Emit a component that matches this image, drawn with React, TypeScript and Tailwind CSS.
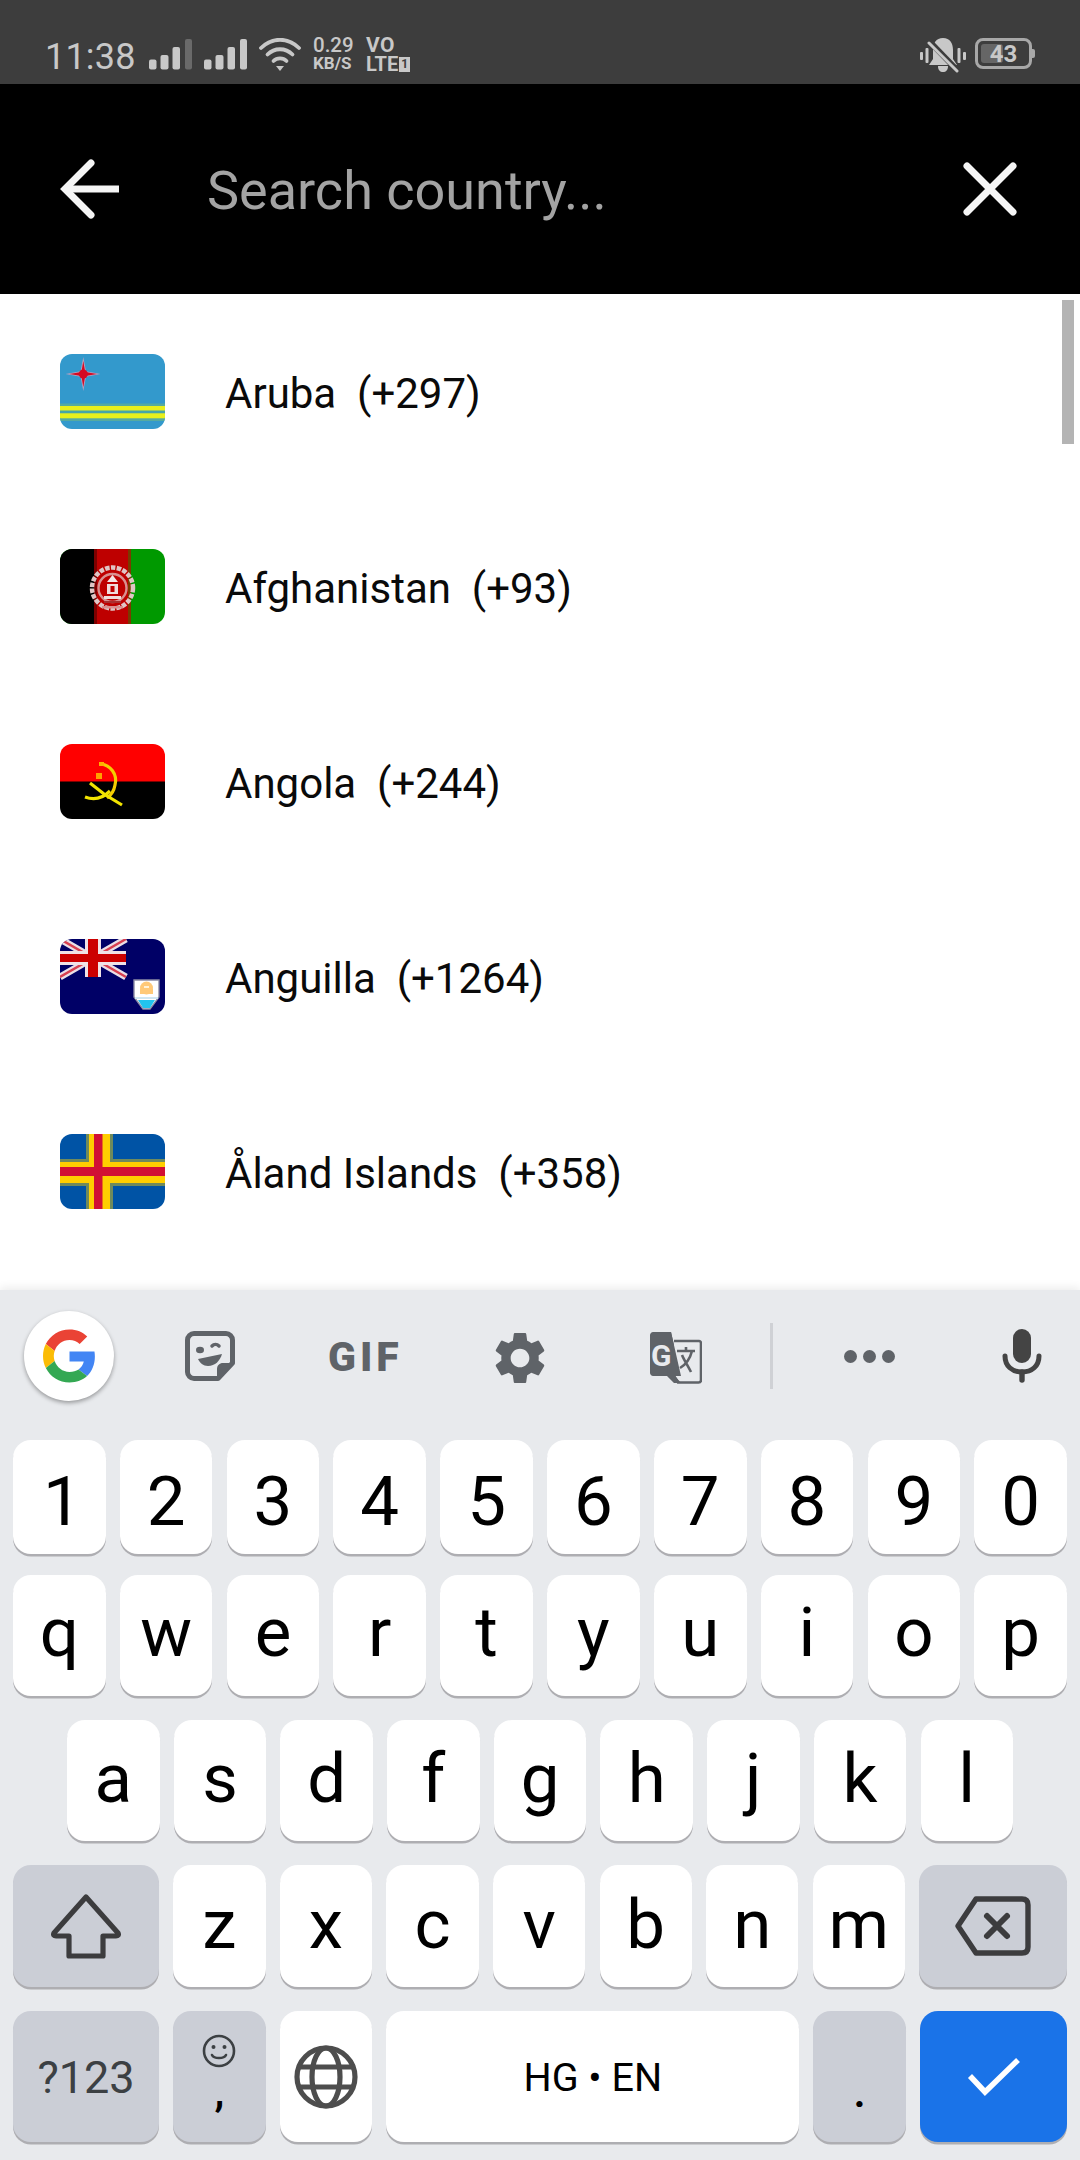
import React from "react";

const font = { fontFamily: "Roboto, sans-serif" };

function Bars({ dim }: { dim?: boolean }) {
  return (
    <svg width="43" height="31" viewBox="0 0 43 31" className="shrink-0">
      <rect x="0" y="20.5" width="7.5" height="10" rx="2" fill="#c8c8c8" />
      <rect x="11.5" y="16" width="8" height="14.5" rx="2" fill="#c8c8c8" />
      <rect x="23.5" y="8" width="7.5" height="22.5" rx="2" fill="#c8c8c8" />
      <rect x="36" y="0" width="7" height="30.5" rx="2" fill={dim ? "#6a6a6a" : "#c8c8c8"} />
    </svg>
  );
}

function Wifi() {
  return (
    <svg width="42" height="34" viewBox="0 0 42 34" fill="none" stroke="#c8c8c8" strokeLinecap="round" className="shrink-0">
      <path d="M2 10C13 -1 29 -1 40 10" strokeWidth="3.8" />
      <path d="M8.5 16.5C15.5 9.5 26.5 9.5 33.5 16.5" strokeWidth="3.8" />
      <path d="M14.5 23C18 19.5 24 19.5 27.5 23" strokeWidth="3.8" />
      <path d="M17 28L25 28L21 33Z" fill="#c8c8c8" stroke="none" />
    </svg>
  );
}

function Bell() {
  return (
    <svg width="46" height="36" viewBox="0 0 46 36" className="shrink-0">
      <path d="M23 1C30 1 33 6 33 13V22L37 28H9L13 22V13C13 6 16 1 23 1Z" fill="#c8c8c8" />
      <path d="M18 29H28C28 33 26 35 23 35C20 35 18 33 18 29Z" fill="#c8c8c8" />
      <path d="M10 5L37 33" stroke="#3d3d3d" strokeWidth="6" />
      <path d="M9 6L37 34" stroke="#c8c8c8" strokeWidth="3" strokeLinecap="round" />
      <rect x="0" y="15" width="3" height="8" rx="1" fill="#c8c8c8" />
      <rect x="5.5" y="11" width="3" height="15" rx="1" fill="#c8c8c8" />
      <rect x="37.5" y="11" width="3" height="15" rx="1" fill="#c8c8c8" />
      <rect x="43" y="15" width="3" height="8" rx="1" fill="#c8c8c8" />
    </svg>
  );
}

function StatusBar() {
  return (
    <div className="h-[84px] bg-[#3d3d3d] flex items-start shrink-0 pt-[37px] pl-[45px] pr-[45px]" style={font}>
      <span className="text-[36px] leading-[36px] mt-[2px] text-[#c8c8c8] w-[104px] shrink-0 tracking-[0.2px]">11:38</span>
      <div className="mt-[2px] flex gap-[12px]">
        <Bars dim />
        <Bars />
      </div>
      <div className="ml-[12px] mt-[1px]">
        <Wifi />
      </div>
      <div className="ml-[12px] w-[53px] flex flex-col text-[#c8c8c8] font-medium">
        <span className="text-[20.5px] leading-[17px]">0.29</span>
        <span className="text-[17px] leading-[16px] mt-[1px] font-bold">KB/S</span>
      </div>
      <div className="flex flex-col text-[#c8c8c8] font-bold">
        <span className="text-[21px] leading-[17px] tracking-[0.5px]">VO</span>
        <div className="flex items-center mt-[2px]">
          <span className="text-[20px] leading-[16px]">LTE</span>
          <span className="ml-[1px] w-[11px] h-[15px] bg-[#c8c8c8] text-[#3d3d3d] text-[12px] leading-[15px] text-center">1</span>
        </div>
      </div>
      <div className="ml-auto flex items-start">
        <Bell />
        <div className="ml-[9px] mt-[1px] flex items-center">
          <div className="relative w-[57px] h-[31px] rounded-[8px] border-[3px] border-[#a8a8a8] flex items-center justify-center">
            <div className="absolute left-[3px] top-[3px] bottom-[3px] w-[22px] rounded-[3px] bg-[#666666]" />
            <span className="relative text-[24px] leading-[24px] font-bold text-[#c8c8c8]">43</span>
          </div>
          <div className="w-[3px] h-[9px] rounded-r-[2px] bg-[#a8a8a8]" />
        </div>
      </div>
    </div>
  );
}

function Header() {
  return (
    <div className="h-[210px] bg-black flex items-center shrink-0 pl-[60px] pr-[63px]" style={font}>
      <svg width="60" height="62" viewBox="0 0 60 62" fill="none" stroke="#f5f5f5" strokeWidth="7" className="shrink-0">
        <path d="M59 31H5" />
        <path d="M31 5L5 31L31 57" strokeLinecap="round" />
      </svg>
      <span className="ml-[87px] mt-[3px] text-[54px] leading-[60px] text-[#a3a3a3]">Search country...</span>
      <svg width="54" height="54" viewBox="0 0 54 54" fill="none" stroke="#f5f5f5" strokeWidth="7" className="ml-auto shrink-0">
        <path d="M4 4L50 50M50 4L4 50" strokeLinecap="round" />
      </svg>
    </div>
  );
}

function Aruba() {
  return (
    <svg viewBox="0 0 105 75" className="w-full h-full block">
      <rect width="105" height="75" fill="#3399cc" />
      <rect y="49.5" width="105" height="17.5" fill="#55aaa0" />
      <rect y="52" width="105" height="4.7" fill="#e8f01c" />
      <rect y="56.7" width="105" height="2.6" fill="#46a6a8" />
      <rect y="59.3" width="105" height="5" fill="#e8f01c" />
      <path d="M23.3 3L26 17.3L40.5 20L26 22.7L23.3 37L20.6 22.7L5.5 20L20.6 17.3Z" fill="#b9a0c0" />
      <path d="M23.3 7L25.2 18L37 20L25.2 22L23.3 33L21.4 22L9.5 20L21.4 18Z" fill="#d40a22" />
      <circle cx="23.3" cy="20" r="4.5" fill="#d40a22" />
    </svg>
  );
}

function Afghanistan() {
  return (
    <svg viewBox="0 0 105 75" className="w-full h-full block">
      <rect width="105" height="75" fill="#009900" />
      <rect width="34" height="75" fill="#000" />
      <rect x="34" width="37" height="75" fill="#be0000" />
      <rect x="34" width="3" height="75" fill="#7d0000" />
      <rect x="68" width="3" height="75" fill="#7a3a00" />
      <circle cx="52.5" cy="39" r="20.5" fill="none" stroke="#e0c6c6" strokeWidth="4.5" strokeDasharray="4.5 1.4" />
      <circle cx="52.5" cy="39" r="14" fill="none" stroke="#d89090" strokeWidth="2.4" />
      <path d="M52.5 26L58 33H47Z" fill="#f4e6e6" />
      <rect x="47" y="35" width="11" height="10" fill="#f0dcdc" />
      <rect x="50.5" y="37" width="4" height="6" fill="#be0000" />
      <rect x="44" y="47" width="17" height="3" fill="#f0dcdc" />
      <rect x="42" y="57" width="21" height="2.5" fill="#d89090" />
      <rect x="44" y="52" width="17" height="2" fill="#a83030" />
    </svg>
  );
}

function Angola() {
  return (
    <svg viewBox="0 0 105 75" className="w-full h-full block">
      <rect width="105" height="38" fill="#ff0000" />
      <rect y="37.5" width="105" height="37.5" fill="#000" />
      <g fill="none" stroke="#f2e400" strokeWidth="3.2">
        <path d="M41 20C50 21 58 30 55 41C54 47 50 52 47 54" stroke="#f4cc00" />
        <path d="M30 39L44 50L62 61" />
        <path d="M25 53C33 56 41 56 50 47" />
      </g>
      <path d="M36 29H42V35H36Z" fill="#ffa000" />
      <path d="M39 18H44V22H39Z" fill="#ffb000" />
    </svg>
  );
}

function Anguilla() {
  return (
    <svg viewBox="0 0 105 75" className="w-full h-full block">
      <rect width="105" height="75" fill="#000066" />
      <g>
        <path d="M0 0L66 38M66 0L0 38" stroke="#eadfe6" strokeWidth="7" />
        <path d="M0 0L66 38M66 0L0 38" stroke="#d84050" strokeWidth="2.4" />
        <rect x="25" width="16" height="38" fill="#f0e2e6" />
        <rect y="12" width="66" height="14" fill="#f0e2e6" />
        <rect x="28" width="10" height="38" fill="#cc0000" />
        <rect y="15" width="66" height="8" fill="#cc0000" />
      </g>
      <path d="M74 41H99V58L90 70H83L74 58Z" fill="#ffffff" stroke="#8b8ba5" strokeWidth="1.4" />
      <circle cx="86.5" cy="49" r="6.5" fill="#ffc978" />
      <rect x="80" y="50" width="13" height="5" fill="#ffc978" />
      <rect x="84" y="47" width="5" height="2" fill="#fff2d8" />
      <path d="M75 58H98V60H75Z" fill="#cfe6f2" />
      <path d="M78 61H95L90 69H83Z" fill="#22c4ee" />
    </svg>
  );
}

function Aland() {
  return (
    <svg viewBox="0 0 105 75" className="w-full h-full block">
      <rect width="105" height="75" fill="#0053a5" />
      <rect x="26" width="27" height="75" fill="#6f8a5c" />
      <rect y="25" width="105" height="27" fill="#6f8a5c" />
      <rect x="29" width="21" height="75" fill="#ffce00" />
      <rect y="28" width="105" height="21" fill="#ffce00" />
      <rect x="34" width="8.5" height="75" fill="#d11034" />
      <rect y="33" width="105" height="9" fill="#d11034" />
    </svg>
  );
}

const countries = [
  { name: "Aruba  (+297)", Flag: Aruba },
  { name: "Afghanistan  (+93)", Flag: Afghanistan },
  { name: "Angola  (+244)", Flag: Angola },
  { name: "Anguilla  (+1264)", Flag: Anguilla },
  { name: "Åland Islands  (+358)", Flag: Aland },
];

function CountryList() {
  return (
    <div className="relative flex-1 min-h-0 bg-white overflow-hidden" style={font}>
      {countries.map(({ name, Flag }) => (
        <div key={name} className="h-[195px] flex items-center pl-[60px]">
          <div className="w-[105px] h-[75px] rounded-[12px] overflow-hidden shrink-0">
            <Flag />
          </div>
          <span className="ml-[60px] mt-[5px] text-[42px] leading-[50px] text-[#0a0a0a] whitespace-pre">{name}</span>
        </div>
      ))}
      <div className="absolute left-[1062px] top-[6px] w-[12px] h-[144px] bg-[#b4b4b4]" />
    </div>
  );
}

function GoogleG() {
  return (
    <svg width="53" height="54" viewBox="0 0 48 48">
      <path fill="#EA4335" d="M24 9.5c3.54 0 6.71 1.22 9.21 3.6l6.85-6.85C35.9 2.38 30.47 0 24 0 14.62 0 6.51 5.38 2.56 13.22l7.98 6.19C12.43 13.72 17.74 9.5 24 9.5z" />
      <path fill="#4285F4" d="M46.98 24.55c0-1.57-.15-3.09-.38-4.55H24v9.02h12.94c-.58 2.96-2.26 5.48-4.78 7.18l7.73 6c4.51-4.18 7.09-10.36 7.09-17.65z" />
      <path fill="#FBBC05" d="M10.53 28.59c-.48-1.45-.76-2.99-.76-4.59s.27-3.14.76-4.59l-7.98-6.19C.92 16.46 0 20.12 0 24c0 3.88.92 7.54 2.56 10.78l7.97-6.19z" />
      <path fill="#34A853" d="M24 48c6.48 0 11.93-2.13 15.89-5.81l-7.73-6c-2.15 1.45-4.92 2.3-8.16 2.3-6.26 0-11.57-4.22-13.47-9.91l-7.98 6.19C6.51 42.62 14.62 48 24 48z" />
    </svg>
  );
}

function Toolbar() {
  return (
    <div className="h-[150px] flex items-start shrink-0 pl-[24px]" style={font}>
      <div className="mt-[21px] w-[90px] h-[90px] rounded-full bg-white shadow-[0_2px_4px_rgba(0,0,0,0.35)] flex items-center justify-center shrink-0">
        <GoogleG />
      </div>
      <svg width="50" height="50" viewBox="0 0 50 50" className="ml-[71px] mt-[41px] shrink-0">
        <path d="M9 2.5H41C44.5 2.5 47.5 5.5 47.5 9V32L33 47.5H9C5.5 47.5 2.5 44.5 2.5 41V9C2.5 5.5 5.5 2.5 9 2.5Z" fill="none" stroke="#5f6368" strokeWidth="5" strokeLinejoin="round" />
        <path d="M49 32H38C34.5 32 32 34.5 32 38V49Z" fill="#5f6368" />
        <ellipse cx="15" cy="19" rx="4" ry="3.2" fill="#5f6368" />
        <path d="M27 15C29 13 32 13 34 15" stroke="#5f6368" strokeWidth="3.5" fill="none" strokeLinecap="round" />
        <path d="M13 28L37 23C35 30 30 35 23 35C18 35 15 32 13 28Z" fill="#5f6368" />
      </svg>
      <span className="ml-[93px] mt-[43px] w-[70px] text-[41px] leading-[48px] font-black tracking-[4px] text-[#5f6368] shrink-0">GIF</span>
      <svg width="50" height="52" viewBox="2.5 2 19 20" className="ml-[97px] mt-[42px] shrink-0">
        <path fill="#5f6368" d="M19.14 12.94c.04-.3.06-.61.06-.94 0-.32-.02-.64-.07-.94l2.03-1.58c.18-.14.23-.41.12-.61l-1.92-3.32c-.12-.22-.37-.29-.59-.22l-2.39.96c-.5-.38-1.03-.7-1.62-.94l-.36-2.54c-.04-.24-.24-.41-.48-.41h-3.84c-.24 0-.43.17-.47.41l-.36 2.54c-.59.24-1.13.57-1.62.94l-2.39-.96c-.22-.08-.47 0-.59.22L2.74 8.87c-.12.21-.08.47.12.61l2.03 1.58c-.05.3-.09.63-.09.94s.02.64.07.94l-2.03 1.58c-.18.14-.23.41-.12.61l1.92 3.32c.12.22.37.29.59.22l2.39-.96c.5.38 1.03.7 1.62.94l.36 2.54c.05.24.24.41.48.41h3.84c.24 0 .44-.17.47-.41l.36-2.54c.59-.24 1.13-.56 1.62-.94l2.39.96c.22.08.47 0 .59-.22l1.92-3.32c.12-.22.07-.47-.12-.61l-2.01-1.58zM12 15.6c-1.98 0-3.6-1.62-3.6-3.6s1.62-3.6 3.6-3.6 3.6 1.62 3.6 3.6-1.62 3.6-3.6 3.6z" />
      </svg>
      <svg width="52" height="52" viewBox="0 0 52 52" className="ml-[105px] mt-[42px] shrink-0">
        <path d="M3 0H21L31 44H3C1.5 44 0 42.5 0 41V3C0 1.5 1.5 0 3 0Z" fill="#5f6368" />
        <path d="M24 9H49C50 9 51 10 51 11V48C51 49.5 50 50.5 48.5 50.5H28L24 44" fill="#e8eaed" stroke="#5f6368" strokeWidth="2.6" />
        <path d="M21 0L31 44H25L31 51H24L17 44Z" fill="#5f6368" />
        <text x="1" y="34" fontFamily="Roboto, sans-serif" fontWeight="700" fontSize="30" fill="#e8eaed">G</text>
        <path d="M27 19H45M36 15V19M42 19C40 27 35 33 30 36M32 23C34 28 38 34 41 40" fill="none" stroke="#5f6368" strokeWidth="2.6" />
      </svg>
      <div className="ml-[68px] mt-[33px] w-[3px] h-[66px] bg-[#cfd1d5] shrink-0" />
      <div className="ml-[71px] mt-[60px] flex gap-[6.5px] shrink-0">
        <div className="w-[12.5px] h-[12.5px] rounded-full bg-[#5f6368]" />
        <div className="w-[12.5px] h-[12.5px] rounded-full bg-[#5f6368]" />
        <div className="w-[12.5px] h-[12.5px] rounded-full bg-[#5f6368]" />
      </div>
      <svg width="40" height="54" viewBox="0 0 40 54" className="ml-[107px] mt-[39px] shrink-0">
        <rect x="11" y="0" width="18" height="34" rx="9" fill="#444444" />
        <path d="M3 27C3 37 10 43 20 43C30 43 37 37 37 27" fill="none" stroke="#444444" strokeWidth="5" strokeLinecap="round" />
        <path d="M20 43V51" stroke="#444444" strokeWidth="5.4" strokeLinecap="round" />
      </svg>
    </div>
  );
}

function Key({
  w,
  gray,
  blue,
  children,
}: {
  w?: string;
  gray?: boolean;
  blue?: boolean;
  children?: React.ReactNode;
}) {
  const bg = blue ? "bg-[#1a73e8]" : gray ? "bg-[#cbced6]" : "bg-white";
  return (
    <div
      className={`h-full rounded-[18px] shadow-[0_2.5px_0_#aeaeb2] flex items-center justify-center text-black ${bg} ${w ?? "flex-1 min-w-0"}`}
    >
      {children}
    </div>
  );
}

function LetterRow({ keys, className, textClass }: { keys: string[]; className: string; textClass: string }) {
  return (
    <div className={`flex gap-[14.2px] ${className}`}>
      {keys.map((k) => (
        <Key key={k}>
          <span className={`text-[69px] leading-[76px] ${textClass} ${k === "1" ? "pl-[6px]" : ""}`}>{k}</span>
        </Key>
      ))}
    </div>
  );
}

function Keyboard() {
  return (
    <div className="h-[870px] bg-[#e8eaed] shrink-0 flex flex-col relative shadow-[0_-3px_8px_rgba(0,0,0,0.07)]" style={font}>
      <Toolbar />
      <LetterRow keys={["1", "2", "3", "4", "5", "6", "7", "8", "9", "0"]} className="h-[114px] px-[13px]" textClass="mt-[10px]" />
      <LetterRow keys={["q", "w", "e", "r", "t", "y", "u", "i", "o", "p"]} className="h-[121px] px-[13px] mt-[21px]" textClass="mb-[6px]" />
      <LetterRow keys={["a", "s", "d", "f", "g", "h", "j", "k", "l"]} className="h-[121px] pl-[67px] pr-[67px] mt-[24px]" textClass="mb-[4px]" />
      <div className="flex gap-[14.2px] h-[122px] px-[13px] mt-[24px]">
        <Key w="w-[146px] shrink-0" gray>
          <svg width="70" height="67" viewBox="0 0 70 67" fill="none" stroke="#3c3c3e" strokeWidth="5.2" strokeLinejoin="round">
            <path d="M35 4L67 40C68 42 67 43 65 43H52V63H18V43H5C3 43 2 42 3 40Z" />
          </svg>
        </Key>
        {["z", "x", "c", "v", "b", "n", "m"].map((k) => (
          <Key key={k} w="w-[92.4px] shrink-0">
            <span className="text-[69px] leading-[76px] mb-[2px]">{k}</span>
          </Key>
        ))}
        <Key w="flex-1 min-w-0" gray>
          <svg width="76" height="60" viewBox="0 0 76 60" fill="none" stroke="#3c3c3e" strokeWidth="5.4" strokeLinejoin="round">
            <path d="M21 3H67C71 3 73 5 73 9V51C73 55 71 57 67 57H21L3 30Z" />
            <path d="M32 20L52 40M52 20L32 40" strokeLinecap="round" strokeWidth="6" />
          </svg>
        </Key>
      </div>
      <div className="flex gap-[14.2px] h-[131px] px-[13px] mt-[24px]">
        <Key w="w-[146px] shrink-0" gray>
          <span className="text-[45px] leading-[50px] mt-[2px] text-[#3c4043]">?123</span>
        </Key>
        <Key w="w-[92.4px] shrink-0" gray>
          <div className="flex flex-col items-center pb-[6px]">
            <svg width="34" height="34" viewBox="0 0 34 34" fill="none" stroke="#3c4043" strokeWidth="2.6" className="mb-[5px]">
              <circle cx="17" cy="17" r="15" />
              <circle cx="11.5" cy="13" r="2" fill="#3c4043" stroke="none" />
              <circle cx="22.5" cy="13" r="2" fill="#3c4043" stroke="none" />
              <path d="M10 21C12 25 22 25 24 21" strokeLinecap="round" />
            </svg>
            <span className="text-[40px] leading-[40px] font-bold">,</span>
          </div>
        </Key>
        <Key w="w-[92.4px] shrink-0">
          <svg width="64" height="64" viewBox="0 0 64 64" fill="none" stroke="#4d4d4d" strokeWidth="5.2">
            <circle cx="32" cy="32" r="29" />
            <ellipse cx="32" cy="32" rx="14" ry="29" />
            <path d="M5 22H59M5 42H59" />
          </svg>
        </Key>
        <Key w="flex-1 min-w-0">
          <span className="text-[39.5px] leading-[44px] mt-[2px]">HG • EN</span>
        </Key>
        <Key w="w-[92.4px] shrink-0" gray>
          <span className="text-[40px] leading-[40px] mt-[34px] font-bold">.</span>
        </Key>
        <Key w="w-[147px] shrink-0" blue>
          <svg width="54" height="42" viewBox="0 0 54 42" fill="none" stroke="#ffffff" strokeWidth="5.5">
            <path d="M3 20L18 36L51 4" />
          </svg>
        </Key>
      </div>
    </div>
  );
}

export default function App() {
  return (
    <div className="w-[1080px] h-[2160px] flex flex-col overflow-hidden bg-white">
      <StatusBar />
      <Header />
      <CountryList />
      <Keyboard />
    </div>
  );
}
